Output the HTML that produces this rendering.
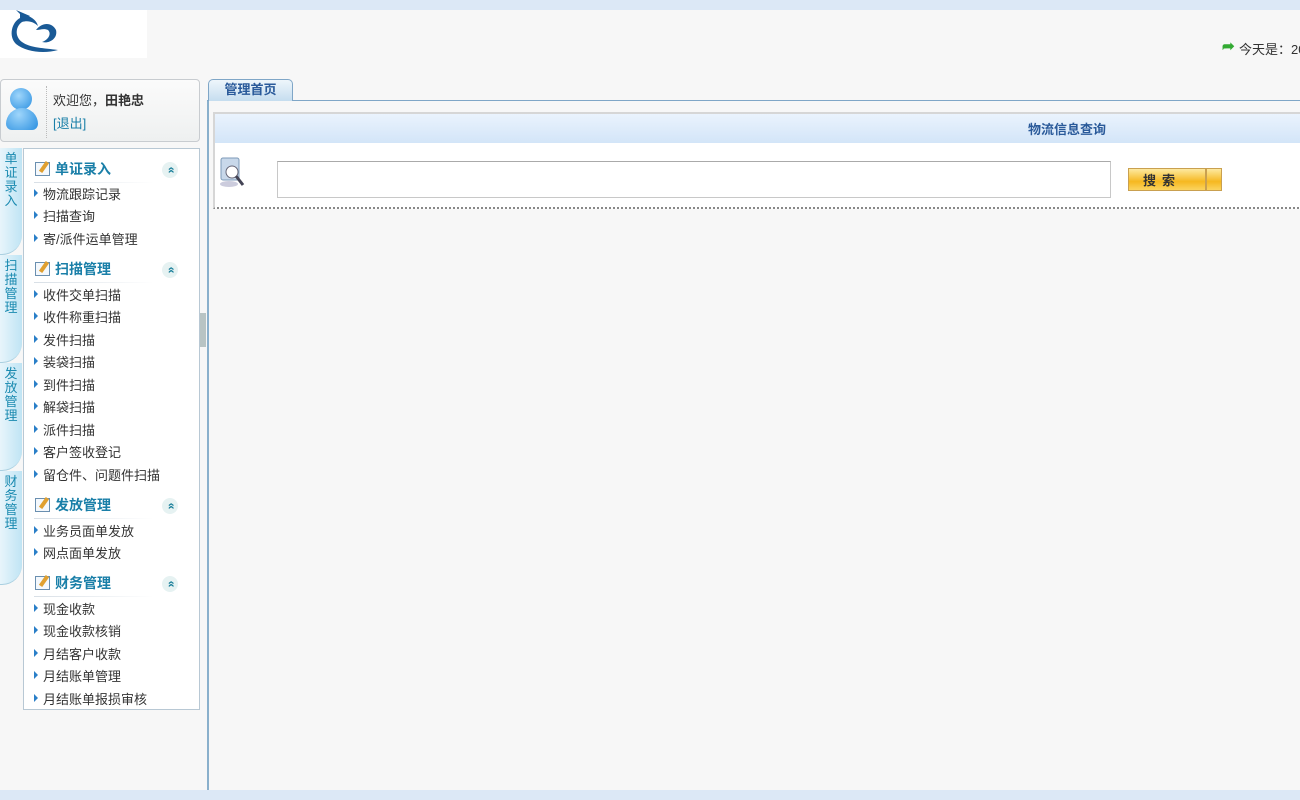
<!DOCTYPE html>
<html><head><meta charset="utf-8">
<style>
*{margin:0;padding:0;box-sizing:border-box}
body{width:1300px;height:800px;background:#f7f7f7;position:relative;overflow:hidden;font-family:"Liberation Sans","Noto Sans CJK SC",sans-serif;font-size:13px;color:#333}
.a{position:absolute;white-space:nowrap}
.hd{font-weight:bold;color:#1a7fa8;font-size:14px}
.it{position:absolute;left:34px;font-size:13px;color:#333;white-space:nowrap}
.it:before{content:"";position:absolute;left:0;top:5px;border-left:4px solid #2a7fc8;border-top:4px solid transparent;border-bottom:4px solid transparent}
.it span{margin-left:9px}
.vt{position:absolute;left:0;width:22px;background:linear-gradient(90deg,#e8f5fb,#bfe4f4);border-bottom:1px solid #a9cfe0;border-radius:0 0 20px 0;color:#1a8ab0;font-size:13px;line-height:14px;text-align:center;padding-top:4px}
.ic{position:absolute;left:35px;width:15px;height:14px;border:1px solid #6a8fb0;background:#f4f8fc}
.ic:after{content:"";position:absolute;left:6px;top:-2px;width:4px;height:12px;background:#e0a030;transform:rotate(35deg)}
.up{position:absolute;left:162px;width:16px;height:16px;border-radius:8px;background:#e6f2f2;color:#1a7f9a;font-size:12px;text-align:center;line-height:16px;font-weight:bold}
.up b{display:inline-block;transform:rotate(-90deg)}
.ul{position:absolute;left:34px;width:120px;height:1px;background:linear-gradient(90deg,#d8dfe6,#fff)}
</style></head><body>
<div class="a" style="left:0;top:0;width:1300px;height:10px;background:#dce8f6"></div>
<div class="a" style="left:0;top:790px;width:1300px;height:10px;background:#dce8f6"></div>
<div class="a" style="left:0;top:10px;width:147px;height:48px;background:#fff"></div>
<svg class="a" style="left:8px;top:8px" width="56" height="46" viewBox="0 0 56 46">
<path d="M12 4 C20 8 28 10 30 18 C26 14 20 12 14 14 C8 18 6 28 14 34 C22 40 36 40 50 42 C36 46 18 44 8 36 C0 28 4 14 12 10 Z" fill="#1a5a96"/>
<path d="M28 22 C34 14 44 14 48 22 C50 30 42 36 34 34 C40 32 44 26 40 22 C36 20 32 22 28 22Z" fill="#1a5a96"/>
<path d="M8 2 L22 8 L16 10Z" fill="#1a5a96"/>
</svg>
<div class="a" style="left:1222px;top:37px;color:#3a3;font-size:15px;font-weight:bold">➦</div>
<div class="a" style="left:1239px;top:39px;font-size:13px">今天是：20</div>

<div class="a" style="left:0;top:79px;width:200px;height:63px;border:1px solid #c8ccd0;border-radius:4px;background:linear-gradient(#fbfbfb,#eef0f0)"></div>
<div class="a" style="left:46px;top:86px;width:1px;height:52px;border-left:1px dotted #bbb"></div>
<div class="a" style="left:10px;top:88px;width:22px;height:22px;border-radius:11px;background:radial-gradient(circle at 40% 35%,#9fd6fb,#2a8fe0)"></div>
<div class="a" style="left:6px;top:108px;width:32px;height:22px;border-radius:16px 16px 6px 6px;background:radial-gradient(circle at 40% 30%,#9fd6fb,#2a8fe0)"></div>
<div class="a" style="left:53px;top:90px">欢迎您，<b>田艳忠</b></div>
<div class="a" style="left:53px;top:113px;color:#1a7fa8">[退出]</div>

<div class="vt" style="top:148px;height:107px">单<br>证<br>录<br>入</div>
<div class="vt" style="top:255px;height:108px">扫<br>描<br>管<br>理</div>
<div class="vt" style="top:363px;height:108px">发<br>放<br>管<br>理</div>
<div class="vt" style="top:471px;height:114px">财<br>务<br>管<br>理</div>

<div class="a" style="left:23px;top:148px;width:177px;height:562px;border:1px solid #b8c8d4;background:#fff"></div>
<div class="ic" style="top:162px"></div><div class="a hd" style="left:55px;top:159px">单证录入</div><div class="up" style="top:162px"><b>»</b></div><div class="ul" style="top:182px"></div>
<div class="it" style="top:184px"><span>物流跟踪记录</span></div>
<div class="it" style="top:206px"><span>扫描查询</span></div>
<div class="it" style="top:229px"><span>寄/派件运单管理</span></div>
<div class="ic" style="top:262px"></div><div class="a hd" style="left:55px;top:259px">扫描管理</div><div class="up" style="top:262px"><b>»</b></div><div class="ul" style="top:282px"></div>
<div class="it" style="top:285px"><span>收件交单扫描</span></div>
<div class="it" style="top:307px"><span>收件称重扫描</span></div>
<div class="it" style="top:330px"><span>发件扫描</span></div>
<div class="it" style="top:352px"><span>装袋扫描</span></div>
<div class="it" style="top:375px"><span>到件扫描</span></div>
<div class="it" style="top:397px"><span>解袋扫描</span></div>
<div class="it" style="top:420px"><span>派件扫描</span></div>
<div class="it" style="top:442px"><span>客户签收登记</span></div>
<div class="it" style="top:465px"><span>留仓件、问题件扫描</span></div>
<div class="ic" style="top:498px"></div><div class="a hd" style="left:55px;top:495px">发放管理</div><div class="up" style="top:498px"><b>»</b></div><div class="ul" style="top:518px"></div>
<div class="it" style="top:521px"><span>业务员面单发放</span></div>
<div class="it" style="top:543px"><span>网点面单发放</span></div>
<div class="ic" style="top:576px"></div><div class="a hd" style="left:55px;top:573px">财务管理</div><div class="up" style="top:576px"><b>»</b></div><div class="ul" style="top:596px"></div>
<div class="it" style="top:599px"><span>现金收款</span></div>
<div class="it" style="top:621px"><span>现金收款核销</span></div>
<div class="it" style="top:644px"><span>月结客户收款</span></div>
<div class="it" style="top:666px"><span>月结账单管理</span></div>
<div class="it" style="top:689px"><span>月结账单报损审核</span></div>
<div class="a" style="left:200px;top:313px;width:6px;height:34px;background:#b8c4c4"></div>

<div class="a" style="left:207px;top:100px;width:2px;height:690px;background:#8ab0cc"></div>
<div class="a" style="left:207px;top:100px;width:1093px;height:1px;background:#7fa6c7"></div>
<div class="a" style="left:208px;top:79px;width:85px;height:22px;border:1px solid #7fa6c7;border-bottom:none;border-radius:5px 5px 0 0;background:linear-gradient(#eef6fb,#c5ddef);text-align:center;font-weight:bold;color:#2a5a9a;line-height:19px">管理首页</div>
<div class="a" style="left:213px;top:112px;width:1090px;height:97px;border:2px solid #d6d6d6;border-bottom:2px dotted #888;background:#fff"></div>
<div class="a" style="left:215px;top:114px;width:1085px;height:29px;background:linear-gradient(#eaf3fd,#d3e5f8)"></div>
<div class="a" style="left:1028px;top:119px;font-weight:bold;color:#2a5a9a">物流信息查询</div>
<svg class="a" style="left:219px;top:156px" width="28" height="32" viewBox="0 0 28 32"><rect x="2" y="2" width="18" height="22" rx="2" fill="#c8d8ea" stroke="#7d9ab8"/><circle cx="13" cy="16" r="6" fill="#fff" stroke="#667"/><line x1="17" y1="20" x2="24" y2="29" stroke="#445" stroke-width="3"/><ellipse cx="10" cy="28" rx="9" ry="3" fill="#ccd"/></svg>
<div class="a" style="left:277px;top:161px;width:834px;height:37px;border:1px solid #c8c8c8;border-top-color:#aaa;background:#fff"></div>
<div class="a" style="left:1128px;top:168px;width:78px;height:23px;border:1px solid #c9a050;background:linear-gradient(#fde9a0,#f6b820 60%,#fbd460);font-weight:bold;line-height:23px;padding-left:14px;letter-spacing:6px;color:#333">搜索</div>
<div class="a" style="left:1206px;top:168px;width:16px;height:23px;border:1px solid #c9a050;background:linear-gradient(#fde9a0,#f6b820 60%,#fbd460)"></div>
</body></html>
